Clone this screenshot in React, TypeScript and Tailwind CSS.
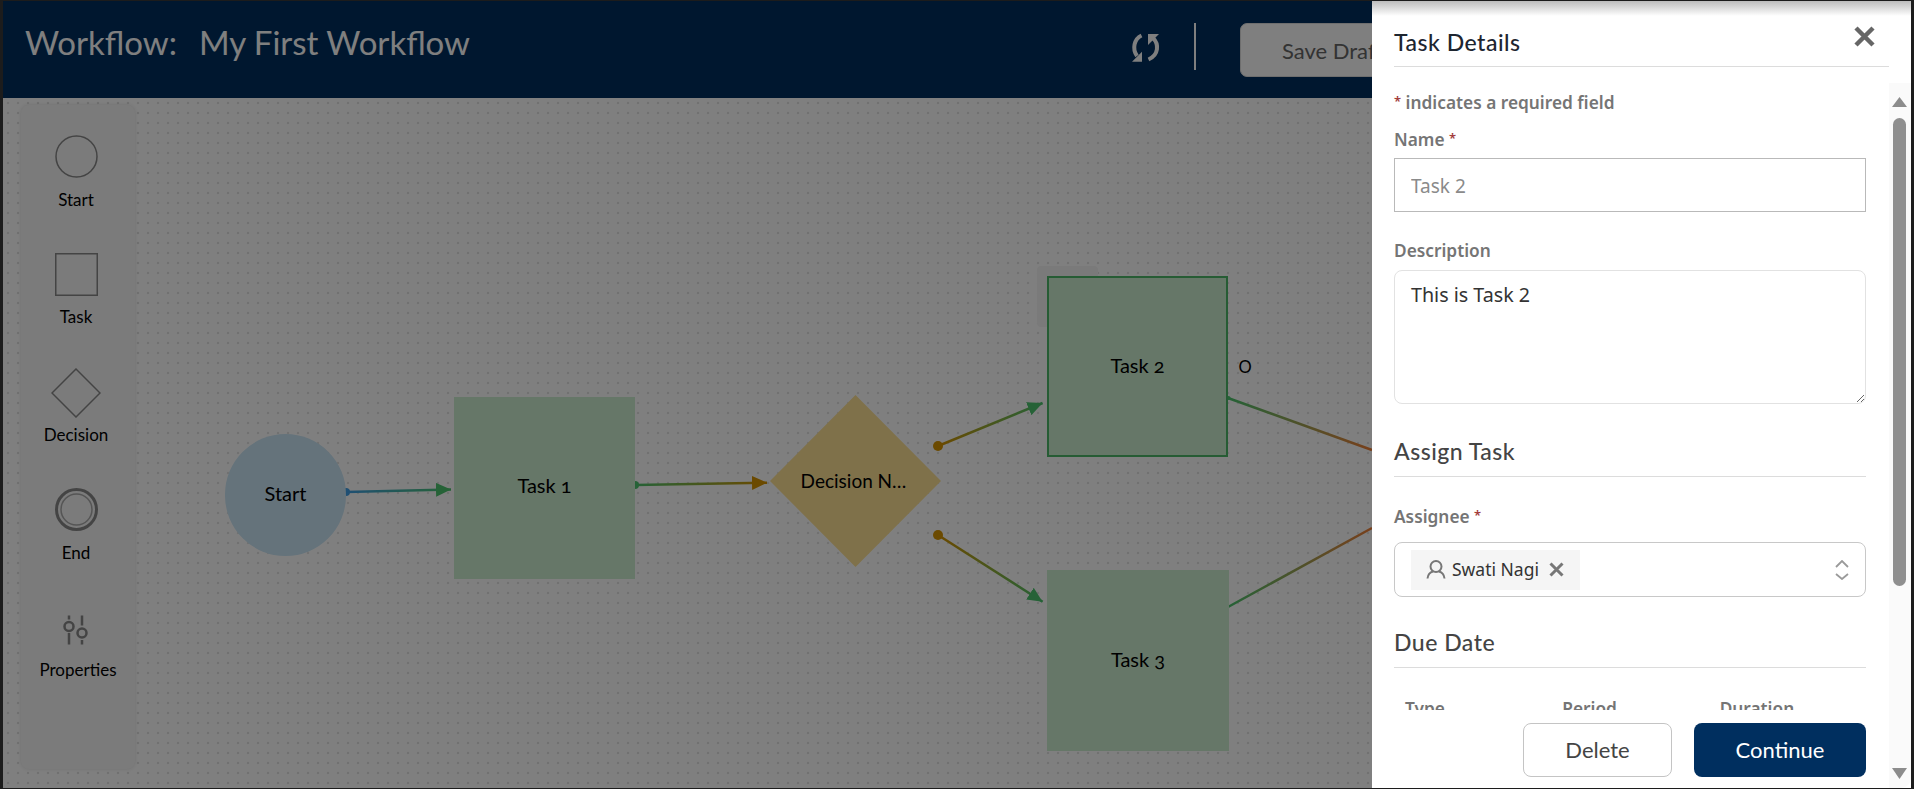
import React from "react";

const heading = "font-['Lato','Liberation_Sans',sans-serif]";
const form = "font-['Noto_Sans','Open_Sans',sans-serif]";

function Star() {
  return <span className="text-[13px] leading-[0] text-[#a33c3c] align-[3px] font-semibold">*</span>;
}

function ToolLabel({ children, cls }: { children: React.ReactNode; cls: string }) {
  return <div className={`text-[17px] leading-[20px] text-black ${cls}`}>{children}</div>;
}

function Toolbar() {
  return (
    <div className={`absolute left-[18px] top-[7px] w-[114px] h-[664px] bg-[#f6f6f6] rounded-[8px] shadow-[0_0_4px_rgba(0,0,0,0.12)] flex flex-col items-center pr-[4px] pt-[30px] ${heading}`}>
      <svg width="43" height="43" viewBox="0 0 43 43">
        <circle cx="21.5" cy="21.5" r="20.5" fill="none" stroke="#888" strokeWidth="1.5" />
      </svg>
      <ToolLabel cls="mt-[12px]">Start</ToolLabel>
      <svg width="43" height="43" viewBox="0 0 43 43" className="mt-[43px]">
        <rect x="0.75" y="0.75" width="41.5" height="41.5" fill="none" stroke="#888" strokeWidth="1.5" />
      </svg>
      <ToolLabel cls="mt-[11px]">Task</ToolLabel>
      <svg width="50" height="50" viewBox="0 0 50 50" className="mt-[41px]">
        <polygon points="25,1 49,25 25,49 1,25" fill="none" stroke="#888" strokeWidth="1.5" />
      </svg>
      <ToolLabel cls="mt-[7px]">Decision</ToolLabel>
      <svg width="43" height="43" viewBox="0 0 43 43" className="mt-[43px]">
        <circle cx="21.5" cy="21.5" r="20" fill="none" stroke="#888" strokeWidth="3" />
        <circle cx="21.5" cy="21.5" r="15.5" fill="none" stroke="#aaa" strokeWidth="1.5" />
      </svg>
      <ToolLabel cls="mt-[12px]">End</ToolLabel>
      <svg width="26" height="30" viewBox="0 0 26 30" className="mt-[52px]" fill="none" stroke="#888" strokeWidth="2.5">
        <path d="M6 0.5V4.5M6 18V29.5M19 0.5V10.5M19 25V29.5" />
        <circle cx="6" cy="11.5" r="4.5" />
        <circle cx="19" cy="18" r="4.5" />
      </svg>
      <ToolLabel cls="mt-[15px] pl-[4px]">Properties</ToolLabel>
    </div>
  );
}

function Edges() {
  return (
    <svg className="absolute left-0 top-0 w-[1908px] h-[689px]" viewBox="3 98 1908 689" fill="none">
      <defs>
        <linearGradient id="e1" gradientUnits="userSpaceOnUse" x1="346" y1="492" x2="451" y2="489">
          <stop offset="0" stopColor="#3f9fe6" />
          <stop offset="1" stopColor="#4cc46e" />
        </linearGradient>
        <linearGradient id="e2" gradientUnits="userSpaceOnUse" x1="635" y1="485" x2="768" y2="482">
          <stop offset="0" stopColor="#4cc46e" />
          <stop offset="1" stopColor="#d69400" />
        </linearGradient>
        <linearGradient id="e3" gradientUnits="userSpaceOnUse" x1="938" y1="446" x2="1043" y2="403">
          <stop offset="0" stopColor="#d69400" />
          <stop offset="1" stopColor="#4cc46e" />
        </linearGradient>
        <linearGradient id="e4" gradientUnits="userSpaceOnUse" x1="938" y1="535" x2="1043" y2="602">
          <stop offset="0" stopColor="#d69400" />
          <stop offset="1" stopColor="#4cc46e" />
        </linearGradient>
        <linearGradient id="e5" gradientUnits="userSpaceOnUse" x1="1228" y1="398" x2="1372" y2="450">
          <stop offset="0" stopColor="#4cc46e" />
          <stop offset="1" stopColor="#f08038" />
        </linearGradient>
        <linearGradient id="e6" gradientUnits="userSpaceOnUse" x1="1228" y1="607" x2="1372" y2="528">
          <stop offset="0" stopColor="#4cc46e" />
          <stop offset="1" stopColor="#f08038" />
        </linearGradient>
        <marker id="mg" markerUnits="userSpaceOnUse" markerWidth="15" markerHeight="14" refX="15" refY="7" orient="auto">
          <path d="M0 0L15 7L0 14Z" fill="#4cc46e" />
        </marker>
        <marker id="mb" markerUnits="userSpaceOnUse" markerWidth="15" markerHeight="14" refX="15" refY="7" orient="auto">
          <path d="M0 0L15 7L0 14Z" fill="#d69400" />
        </marker>
      </defs>
      <g strokeWidth="2.5">
        <path d="M346 492L451 489.5" stroke="url(#e1)" markerEnd="url(#mg)" />
        <path d="M635 485L767 482.7" stroke="url(#e2)" markerEnd="url(#mb)" />
        <path d="M938 446L1042.6 403" stroke="url(#e3)" markerEnd="url(#mg)" />
        <path d="M938 535L1042.6 601.7" stroke="url(#e4)" markerEnd="url(#mg)" />
        <path d="M1228 398L1372 450" stroke="url(#e5)" />
        <path d="M1228 607L1372 528" stroke="url(#e6)" />
      </g>
      <circle cx="346" cy="492" r="4" fill="#3f9fe6" />
      <circle cx="635" cy="485" r="4" fill="#4cc46e" />
      <ellipse cx="938" cy="446" rx="5" ry="5" fill="#d69400" />
      <ellipse cx="938" cy="535" rx="5" ry="5" fill="#d69400" />
      <circle cx="1228.5" cy="398" r="2" fill="#4cc46e" />
    </svg>
  );
}

function Canvas() {
  const node = "absolute flex items-center justify-center text-black oldstyle-nums";
  return (
    <div className={`relative flex-1 bg-white bg-[radial-gradient(circle,#e2e2e2_1.3px,transparent_1.6px)] bg-[length:10px_10px] ${heading}`}>
      <div className="absolute left-[1034px] top-[168px] w-[61px] h-[61px] rounded-[4px] bg-[#f4f4f4]" />
      <Edges />
      <div className={`${node} left-[222px] top-[336px] w-[121px] h-[122px] pb-[5px] text-[20px] rounded-full bg-[#cae6f6]`}>Start</div>
      <div className={`${node} left-[451px] top-[299px] w-[181px] h-[182px] pb-[6px] text-[20px] bg-[#cceed0]`}>Task 1</div>
      <div className={`${node} left-[767px] top-[297px] w-[171px] h-[172px] text-[19px] bg-[#ffe294] pr-[4px] [clip-path:polygon(50%_0,100%_50%,50%_100%,0_50%)]`}>Decision N…</div>
      <div className={`${node} left-[1044px] top-[178px] w-[181px] h-[181px] pb-[3px] text-[20px] bg-[#cceed0] border-2 border-[#4cb868]`}>Task 2</div>
      <div className={`${node} left-[1044px] top-[472px] w-[182px] h-[181px] pb-[3px] text-[20px] bg-[#cceed0]`}>Task 3</div>
      <div className="absolute left-[1235px] top-[258px] w-[14px] h-[22px] flex items-center justify-center text-[16.5px] text-black">O</div>
      <Toolbar />
    </div>
  );
}

function Header() {
  return (
    <div className={`h-[97px] shrink-0 bg-[#002f5f] flex items-start ${heading}`}>
      <div className="flex-1 pl-[22px] pt-[21px] flex gap-[22px] text-[33px] leading-[40px] text-white">
        <span>Workflow:</span>
        <span>My First Workflow</span>
      </div>
      <div className="w-[781px] shrink-0 flex items-start">
        <svg width="40" height="35" viewBox="0 0 40 35" fill="none" className="mt-[29px]">
          <path d="M11.5 5.5C4 9 2 19 7 26" stroke="#fff" strokeWidth="4" />
          <polygon points="2,31.7 12,31.7 12,21.7" fill="#fff" />
          <path d="M23 8C29 14 29 25 18.5 29.5" stroke="#fff" strokeWidth="4" />
          <polygon points="18,4 29,4 18,15" fill="#fff" />
        </svg>
        <div className="w-[2px] h-[47px] bg-white mt-[22px] ml-[24px]" />
        <div className="mt-[22px] ml-[44px] h-[54px] w-[260px] bg-white rounded-[7px] border border-[#ddd] flex items-center pl-[41px] text-[22px] text-[#666]">
          Save Draft
        </div>
      </div>
    </div>
  );
}

function Scrollbar() {
  return (
    <div className="w-[22px] mt-[16px] bg-[#fafafa] flex flex-col items-center pr-[1px] pt-[14px] rounded-br-[10px]">
      <svg width="15" height="10" viewBox="0 0 15 10"><polygon points="7.5,0 15,10 0,10" fill="#8c8c8c" /></svg>
      <div className="w-[13px] h-[468px] mt-[11px] rounded-[7px] bg-[#8f8f8f]" />
      <svg width="15" height="11" viewBox="0 0 15 11" className="mt-auto mb-[9px]"><polygon points="0,0 15,0 7.5,11" fill="#8c8c8c" /></svg>
    </div>
  );
}

function Label({ children, cls }: { children: React.ReactNode; cls: string }) {
  return <div className={`text-[17.3px] leading-[22px] font-semibold text-[#757575] ${cls}`}>{children}</div>;
}

function SectionTitle({ children, cls }: { children: React.ReactNode; cls: string }) {
  return (
    <div className={`pb-[11px] border-b border-[#dcdcdc] text-[23px] tracking-[0.5px] leading-[28px] font-medium text-[#444] ${heading} ${cls}`}>
      {children}
    </div>
  );
}

function Panel() {
  return (
    <div className="absolute right-0 top-0 bottom-0 w-[539px] bg-white flex flex-col">
      <div className="h-[15px] -mb-[15px] bg-gradient-to-b from-[#bdbdbd] to-white" />
      <div className="relative h-[66px] shrink-0 mx-[22px] border-b border-[#dcdcdc] flex items-start justify-between">
        <div className={`mt-[27px] text-[23px] tracking-[0.5px] leading-[28px] font-medium text-[#1d2530] ${heading}`}>Task Details</div>
        <svg width="21" height="21" viewBox="0 0 21 21" className="mt-[25px] mr-[14px]" stroke="#666" strokeWidth="4.5" fill="none">
          <path d="M2 2L19 19M19 2L2 19" />
        </svg>
      </div>
      <div className="flex-1 flex min-h-0">
        <div className="flex-1 flex flex-col min-w-0">
          <div className={`h-[643px] overflow-hidden pl-[22px] pr-[23px] ${form}`}>
            <Label cls="mt-[25px]"><Star /> indicates a required field</Label>
            <Label cls="mt-[15px]">Name <Star /></Label>
            <input
              readOnly
              defaultValue="Task 2"
              className="block mt-[7px] w-full h-[54px] px-[16px] pt-[2px] border border-[#b9b9b9] text-[19px] text-[#8a8a8a] outline-none"
            />
            <Label cls="mt-[28px]">Description</Label>
            <textarea
              readOnly
              defaultValue="This is Task 2"
              className="block mt-[8px] w-full h-[134px] px-[16px] py-[9px] border border-[#e2e2e2] rounded-[8px] text-[19.7px] leading-[30px] text-[#333] outline-none resize-y"
            />
            <SectionTitle cls="mt-[33px]">Assign Task</SectionTitle>
            <Label cls="mt-[29px]">Assignee <Star /></Label>
            <div className="mt-[14px] h-[55px] border border-[#c8c8c8] rounded-[8px] flex items-center pl-[16px] pr-[16px] justify-between">
              <div className="h-[40px] w-[169px] bg-[#f5f5f5] flex items-center pl-[15px]">
                <svg width="20" height="19" viewBox="0 0 20 19" fill="none" stroke="#777" strokeWidth="2">
                  <circle cx="10" cy="6.5" r="5.5" />
                  <path d="M1.5 18.5C2 14 5 12 7 11.5M18.5 18.5C18 14 15 12 13 11.5" />
                </svg>
                <span className="ml-[6px] text-[17.5px] text-[#333]">Swati Nagi</span>
                <svg width="15" height="15" viewBox="0 0 15 15" className="ml-[10px]" stroke="#777" strokeWidth="3" fill="none">
                  <path d="M1.5 1.5L13.5 13.5M13.5 1.5L1.5 13.5" />
                </svg>
              </div>
              <svg width="14" height="20" viewBox="0 0 14 20" fill="none" stroke="#9a9a9a" strokeWidth="1.8">
                <path d="M1 7L7 1L13 7M1 14L7 19L13 14" />
              </svg>
            </div>
            <SectionTitle cls="mt-[31px]">Due Date</SectionTitle>
            <div className="mt-[30px] grid grid-cols-3">
              <Label cls="pl-[11px]">Type</Label>
              <Label cls="pl-[11px]">Period</Label>
              <Label cls="pl-[11px]">Duration</Label>
            </div>
          </div>
          <div className={`flex-1 flex justify-end items-start gap-[22px] pt-[13px] pr-[23px] text-[22px] ${heading}`}>
            <button className="w-[149px] h-[54px] rounded-[8px] border border-[#c4c4c4] bg-white text-[#444] pb-[2px]">Delete</button>
            <button className="w-[172px] h-[54px] rounded-[8px] bg-[#002f5f] text-white pb-[2px]">Continue</button>
          </div>
        </div>
        <Scrollbar />
      </div>
    </div>
  );
}

export default function App() {
  return (
    <div className="relative w-[1914px] h-[789px] overflow-hidden border-y border-x-[3px] border-[#1c1c1c]">
      <div className="flex flex-col h-full">
        <Header />
        <Canvas />
      </div>
      <div className="absolute inset-0 bg-black/50" />
      <Panel />
    </div>
  );
}
